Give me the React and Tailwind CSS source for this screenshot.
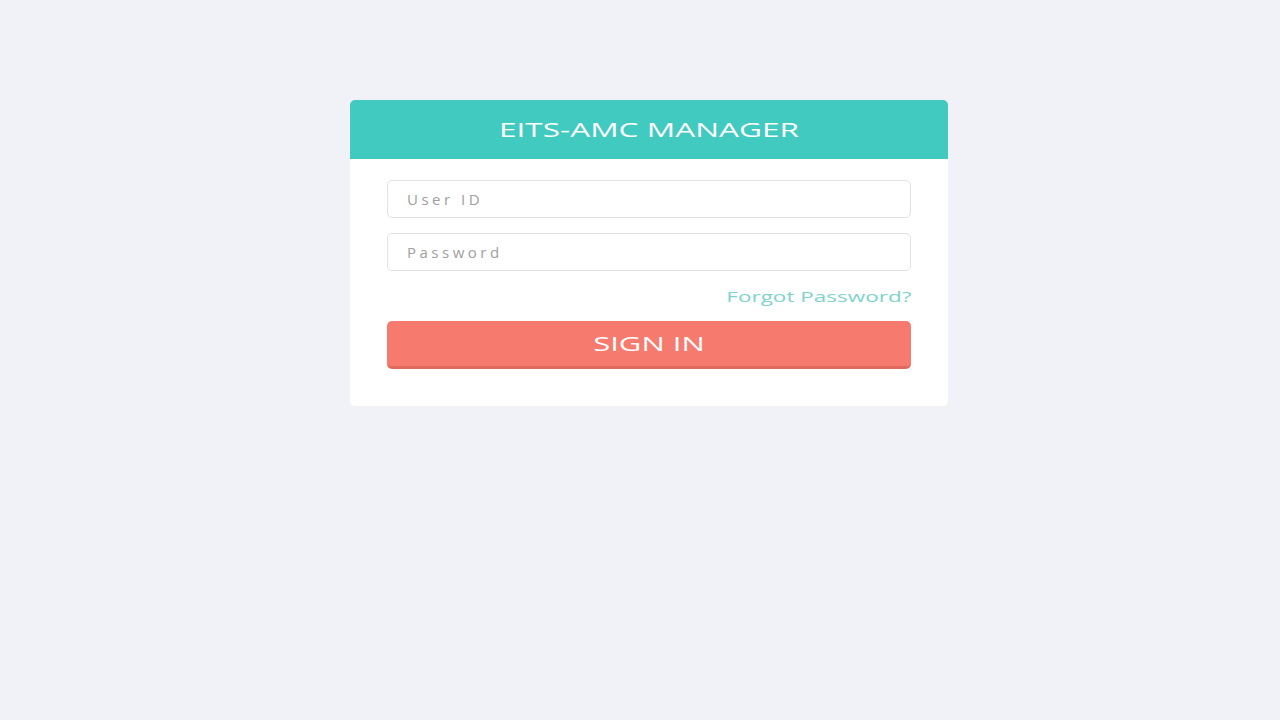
export default function App() {
  const handleLogin = (e) => {
    e.preventDefault();
  };

  return (
    <div
      className="flex min-h-screen w-full justify-center bg-[#f1f2f7] pt-[100px] pl-[18px]"
      style={{ fontFamily: '"Open Sans", "Liberation Sans", sans-serif' }}
    >
      <div className="h-fit w-[598px] rounded-[5px] bg-white">
        {/* Header */}
        <div className="flex h-[59px] items-center justify-center rounded-t-[5px] bg-[#41cac0]">
          <span className="inline-block origin-center scale-x-[1.58] text-[20px] font-normal text-white">
            EITS-AMC MANAGER
          </span>
        </div>

        <form onSubmit={handleLogin} className="px-[37px] pt-[21px] pb-[37px]">
          <input
            type="text"
            placeholder="User ID"
            className="block h-[38px] w-full rounded-[5px] border border-[#e2e2e4] px-[19px] text-[15px] tracking-[3.5px] text-[#555] outline-none placeholder:text-[#a0a0a0]"
          />
          <input
            type="password"
            placeholder="Password"
            className="mt-[15px] block h-[38px] w-full rounded-[5px] border border-[#e2e2e4] px-[19px] text-[15px] tracking-[3.5px] text-[#555] outline-none placeholder:text-[#a0a0a0]"
          />

          <div className="mt-[15px] flex h-[20px] items-center justify-end">
            <a href="#" className="inline-block origin-right scale-x-[1.5] text-[15px] text-[#7fd3cd]">
              Forgot Password?
            </a>
          </div>

          <button
            type="submit"
            className="mt-[15px] flex h-[48px] w-full items-center justify-center rounded-[5px] border-b-[3px] border-[#e0685d] bg-[#f67a6e]"
          >
            <span className="inline-block origin-center scale-x-[1.55] text-[20px] text-white">
              SIGN IN
            </span>
          </button>
        </form>
      </div>
    </div>
  );
}
